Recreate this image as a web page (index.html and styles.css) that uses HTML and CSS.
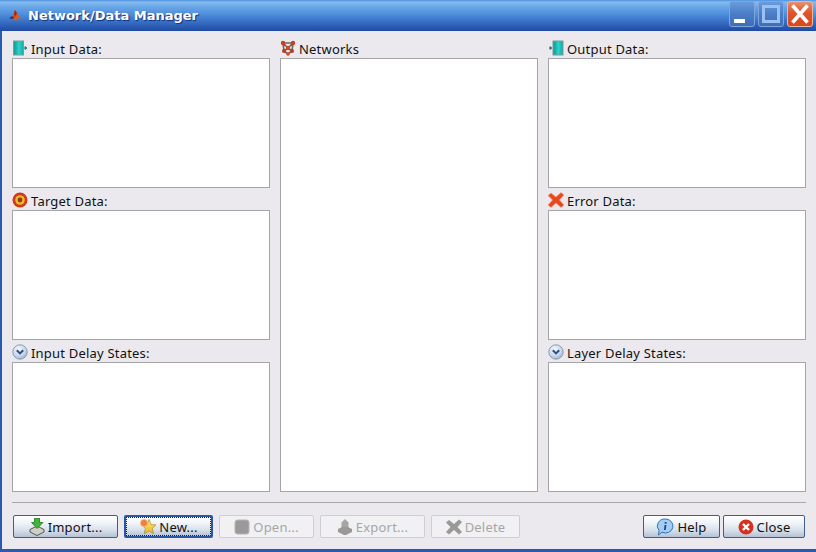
FILE: index.html
```html
<!DOCTYPE html>
<html lang="en">
<head>
    <meta charset="UTF-8">
    <meta name="viewport" content="width=device-width, initial-scale=1.0">
    <title>Network/Data Manager</title>
    <link rel="stylesheet" href="styles.css">
</head>
<body>
    <svg class="defs" width="0" height="0">
        <defs>
            <linearGradient id="teal" x1="0" x2="1" y1="0" y2="0">
                <stop offset="0" stop-color="#0d9590"/>
                <stop offset="0.55" stop-color="#2ad4cc"/>
                <stop offset="1" stop-color="#14a5a0"/>
            </linearGradient>
            <radialGradient id="ball" cx="0.4" cy="0.3" r="0.8">
                <stop offset="0" stop-color="#f4f7fb"/>
                <stop offset="0.6" stop-color="#c8d6e8"/>
                <stop offset="1" stop-color="#8fa4c0"/>
            </radialGradient>
            <linearGradient id="star" x1="0" x2="0" y1="0" y2="1">
                <stop offset="0" stop-color="#ffe97a"/>
                <stop offset="1" stop-color="#eeb51e"/>
            </linearGradient>
            <symbol id="chevron-ball" viewBox="0 0 16 16">
                <circle cx="8" cy="8" r="7.200" fill="url(#ball)" stroke="#8a9cb4"/>
                <path d="M4.800 6.200 8 9.400l3.200-3.200" fill="none" stroke="#2a4f8f" stroke-width="2"/>
            </symbol>
        </defs>
    </svg>

    <div class="window">
        <div class="titlebar">
            <svg class="title-icon" width="16" height="16" viewBox="0 0 16 16">
                <path d="M2 10 5.500 8 8 2l2 3 4 6-3-1-2 3-3-3z" fill="#e2571c"/>
                <path d="M2 10 5.500 8l2 2-3 1z" fill="#3d3560"/>
                <path d="M8 2l2 3-2 4-1-3z" fill="#9c2a10"/>
            </svg>
            <span class="title-text">Network/Data Manager</span>
            <div class="win-buttons">
                <div class="win-btn"><span class="min-glyph"></span></div>
                <div class="win-btn"><span class="max-glyph"></span></div>
                <div class="win-btn win-close">
                    <svg width="24" height="24" viewBox="0 0 24 24">
                        <path d="M4.500 3.500 19.500 20.500M19.500 3.500 4.500 20.500" stroke="#fff" stroke-width="3.600" fill="none"/>
                    </svg>
                </div>
            </div>
        </div>

        <div class="content">
            <div class="panels">
                <div class="column">
                    <div class="field">
                        <div class="field-label">
                            <svg class="icon" width="16" height="16" viewBox="0 0 16 16">
                                <rect x="1.500" y="1" width="10" height="14" fill="url(#teal)" stroke="#7a9ca0"/>
                                <path d="M12 8h1.500M13 6.500 15 8l-2 1.500z" fill="#3a7f88" stroke="#3a7f88"/>
                            </svg>
                            <span>Input Data:</span>
                        </div>
                        <div class="list"></div>
                    </div>
                    <div class="field">
                        <div class="field-label">
                            <svg class="icon" width="16" height="16" viewBox="0 0 16 16">
                                <circle cx="8" cy="8" r="7.500" fill="#d8341a"/>
                                <circle cx="8" cy="8" r="4.800" fill="#eebc24"/>
                                <circle cx="8" cy="8" r="2.400" fill="#8a3b2a"/>
                            </svg>
                            <span>Target Data:</span>
                        </div>
                        <div class="list"></div>
                    </div>
                    <div class="field">
                        <div class="field-label">
                            <svg class="icon" width="16" height="16"><use href="#chevron-ball"/></svg>
                            <span>Input Delay States:</span>
                        </div>
                        <div class="list"></div>
                    </div>
                </div>

                <div class="column">
                    <div class="field field-tall">
                        <div class="field-label">
                            <svg class="icon" width="16" height="16" viewBox="0 0 16 16">
                                <path d="M3 3h10M3 3l5 5M13 3 8 8M3 3l1 8M13 3l-1 8M8 8l-4 3M8 8l4 3M4 11l4 3 4-3" stroke="#6a6460" stroke-width="1.600" fill="none"/>
                                <circle cx="3" cy="3" r="2.200" fill="#c8401e"/>
                                <circle cx="13" cy="3" r="2.200" fill="#c8401e"/>
                                <circle cx="8" cy="8" r="2.200" fill="#d8481f"/>
                                <circle cx="4" cy="11" r="2" fill="#b83c20"/>
                                <circle cx="12" cy="11" r="2" fill="#b83c20"/>
                                <circle cx="8" cy="14" r="1.800" fill="#d8481f"/>
                            </svg>
                            <span>Networks</span>
                        </div>
                        <div class="list"></div>
                    </div>
                </div>

                <div class="column">
                    <div class="field">
                        <div class="field-label">
                            <svg class="icon" width="16" height="16" viewBox="0 0 16 16">
                                <path d="M1 8h2M2 6.500 4 8 2 9.500z" fill="#3a7f88" stroke="#3a7f88"/>
                                <rect x="5" y="1" width="10" height="14" fill="url(#teal)" stroke="#7a9ca0"/>
                            </svg>
                            <span>Output Data:</span>
                        </div>
                        <div class="list"></div>
                    </div>
                    <div class="field">
                        <div class="field-label">
                            <svg class="icon" width="16" height="16" viewBox="0 0 16 16">
                                <path d="M3 1 8 5 13 .5 16 3l-4.500 5 4.500 5-3 2.500L8 11l-5 4.500L0 13l4.500-5L0 3.500z" fill="#e8481c" stroke="#f4a080" stroke-width=".7"/>
                            </svg>
                            <span>Error Data:</span>
                        </div>
                        <div class="list"></div>
                    </div>
                    <div class="field">
                        <div class="field-label">
                            <svg class="icon" width="16" height="16"><use href="#chevron-ball"/></svg>
                            <span>Layer Delay States:</span>
                        </div>
                        <div class="list"></div>
                    </div>
                </div>
            </div>

            <div class="separator"></div>

            <div class="button-row">
                <div class="btn btn-import">
                    <svg width="16" height="18" viewBox="0 0 16 18">
                        <path d="M1 11.500 8 8l7 3.500v2.500L8 17.500 1 14z" fill="#cfcfca" stroke="#55554f"/>
                        <path d="M5.500 0h5v4.500H14L8 10.500 2.500 4.500h3z" fill="#3fb53a" stroke="#1f7a20" stroke-width=".8"/>
                    </svg>
                    <span>Import...</span>
                </div>
                <div class="btn btn-new">
                    <div class="focus-ring">
                        <svg width="17" height="17" viewBox="0 0 17 17">
                            <path d="M10 1.500 12 6.500 17 7l-3.700 3.300 1.200 5.200L10 13l-4.800 2.700 1.200-5.200L2.700 7 8 6.500z" fill="url(#star)" stroke="#a88a2a" stroke-width=".7"/>
                            <circle cx="5" cy="5" r="3.600" fill="#f0803c" stroke="#f0c090" stroke-width=".8"/>
                        </svg>
                        <span>New...</span>
                    </div>
                </div>
                <div class="btn btn-open disabled">
                    <svg width="16" height="16" viewBox="0 0 16 16">
                        <rect x="1" y="1" width="14" height="14" rx="2.500" fill="#9a9a9a" stroke="#b4b4b4"/>
                    </svg>
                    <span>Open...</span>
                </div>
                <div class="btn btn-export disabled">
                    <svg width="16" height="16" viewBox="0 0 16 16">
                        <path d="M1 10 8 6.500 15 10v3L8 16.500 1 13z" fill="#999"/>
                        <path d="M4.500 8V3.500L8 0l3.500 3.500V8z" fill="#a6a6a6"/>
                    </svg>
                    <span>Export...</span>
                </div>
                <div class="btn btn-delete disabled">
                    <svg width="16" height="16" viewBox="0 0 16 16">
                        <path d="M3 1 8 5 13 .5 16 3l-4.500 5 4.500 5-3 2.500L8 11l-5 4.500L0 13l4.500-5L0 3.500z" fill="#999"/>
                    </svg>
                    <span>Delete</span>
                </div>
                <div class="spacer"></div>
                <div class="btn btn-help">
                    <svg width="18" height="18" viewBox="0 0 18 18">
                        <path d="M9.500 1a7.500 7 0 1 1-3.500 13.200L2.500 17l.6-4.500A7.500 7 0 0 1 9.500 1z" fill="#a4cdf4" stroke="#2f70b8"/>
                        <path d="M8.800 4h2l-.3 1.700H8.500zM8.500 7h2l-.8 5H7.900z" fill="#1d4f9c"/>
                    </svg>
                    <span>Help</span>
                </div>
                <div class="btn btn-close">
                    <svg width="16" height="16" viewBox="0 0 16 16">
                        <circle cx="8" cy="8" r="7.500" fill="#d8301e"/>
                        <path d="M5 5l6 6M11 5l-6 6" stroke="#fff" stroke-width="2.400"/>
                    </svg>
                    <span>Close</span>
                </div>
            </div>
        </div>
    </div>
</body>
</html>
```

FILE: styles.css
```css
body {
    margin: 0;
    padding: 0;
    background-color: #ebe9ed;
    font-family: "Noto Sans", sans-serif;
    font-size: 13px;
    letter-spacing: 0.2px;
    color: #111;
    overflow: hidden;
}
.defs {
    display: block;
    height: 0;
}
.window {
    display: flex;
    flex-direction: column;
    width: 816px;
    height: 552px;
}
.titlebar {
    display: flex;
    align-items: center;
    flex: none;
    height: 31px;
    box-sizing: border-box;
    padding-left: 7px;
    background: linear-gradient(to bottom, #4b8fe0 0, #86bcee 2px, #69a6e8 7px, #4f8fdc 14px, #3a72c8 21px, #2552ac 29px, #1f4aa0 31px);
}
.title-icon {
    flex: none;
    filter: blur(0.3px);
}
.title-text {
    margin-left: 5px;
    font-family: "DejaVu Sans", sans-serif;
    font-size: 13px;
    font-weight: bold;
    letter-spacing: 0;
    color: #fff;
    text-shadow: 1px 1px 1px #0f2f78;
}
.win-buttons {
    display: flex;
    gap: 3px;
    margin-left: auto;
    margin-right: 3px;
    padding-bottom: 3px;
}
.win-btn {
    display: flex;
    position: relative;
    box-sizing: border-box;
    width: 26px;
    height: 26px;
    border: 1px solid #7ea6dc;
    border-radius: 3px;
    background: linear-gradient(to bottom, #6a9cdc, #4a7cc8 50%, #3f6eb8);
}
.min-glyph {
    width: 11px;
    height: 4px;
    margin: auto 0 3px 4px;
    background-color: #fff;
}
.max-glyph {
    box-sizing: border-box;
    width: 18px;
    height: 18px;
    margin: auto;
    border: 3px solid #9cc0ec;
}
.win-close {
    align-items: center;
    justify-content: center;
    border-color: #e8b8a0;
    background: linear-gradient(to bottom, #e89070, #e0552a 45%, #d8481c);
}
.win-close svg {
    position: absolute;
    left: 0;
    top: 0;
}
.content {
    display: flex;
    flex-direction: column;
    flex: 1;
    min-height: 0;
    padding: 9px 10px 11px 10px;
    border-left: 2px solid #2a5ab0;
    border-bottom: 3px solid #2a5ab0;
}
.panels {
    display: flex;
    gap: 10px;
    height: 452px;
}
.column {
    display: flex;
    flex-direction: column;
    gap: 4px;
    width: 258px;
}
.field {
    display: flex;
    flex-direction: column;
}
.field-tall {
    flex: 1;
}
.field-tall .list {
    flex: 1;
    height: auto;
}
.field-label {
    display: flex;
    align-items: center;
    gap: 3px;
    height: 18px;
}
.icon {
    flex: none;
    margin-top: -2px;
    filter: blur(0.3px);
}
.btn svg {
    flex: none;
    filter: blur(0.3px);
}
.list {
    box-sizing: border-box;
    height: 130px;
    background-color: #fff;
    border: 1px solid #a5a5a8;
}
.separator {
    height: 1px;
    margin-top: 10px;
    background-color: #a8a8a8;
}
.button-row {
    display: flex;
    gap: 6px;
    margin-top: 12px;
    padding-left: 1px;
    padding-right: 1px;
}
.spacer {
    flex: 1;
}
.btn {
    display: flex;
    align-items: center;
    justify-content: center;
    gap: 3px;
    box-sizing: border-box;
    height: 23px;
    border: 1px solid #3c5f92;
    border-radius: 2px;
    background: linear-gradient(to bottom, #fff 0, #f2f5f9 30%, #d6dfe9 70%, #b4c2d4 100%);
}
.btn-import { width: 105px; }
.btn-new { width: 89px; border: 2px solid #2a56a8; }
.btn-open { width: 95px; }
.btn-export { width: 105px; }
.btn-delete { width: 89px; }
.btn-help { width: 77px; margin-right: -3px; }
.btn-close { width: 82px; }
.focus-ring {
    display: flex;
    align-items: center;
    justify-content: center;
    gap: 3px;
    flex: 1;
    align-self: stretch;
    border: 1px dotted #223;
}
.disabled {
    border-color: #cfcfd2;
    background: #f1f1f3;
    color: #a6a6a6;
}
```
